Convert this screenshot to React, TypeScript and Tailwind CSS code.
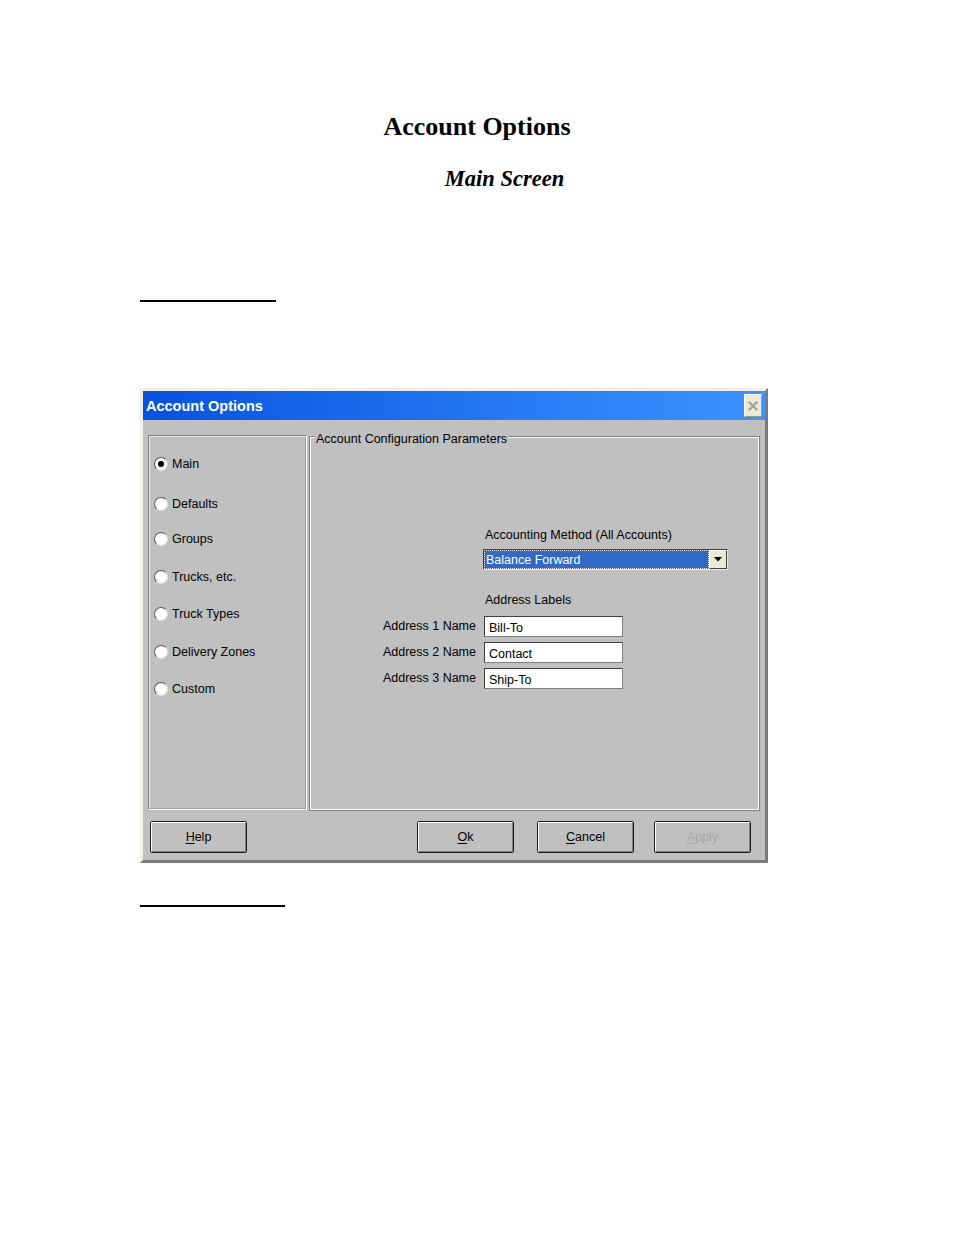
import React from "react";

const sans = "font-['Liberation_Sans',Arial,sans-serif]";

function Radio({ label, checked, mt }: { label: string; checked?: boolean; mt: string }) {
  return (
    <div className={`flex items-center h-[16px] pl-[4px] ${mt}`}>
      <span className="w-[14px] h-[14px] rounded-full bg-white border-[1.5px] border-t-[#5a5a5a] border-l-[#5a5a5a] border-b-[#dcdcdc] border-r-[#dcdcdc] flex items-center justify-center shrink-0">
        {checked && <span className="w-[6px] h-[6px] rounded-full bg-black" />}
      </span>
      <span className="ml-[4px] text-[12.5px] leading-[14px] text-black">{label}</span>
    </div>
  );
}

function Btn({ k, rest, ml, disabled }: { k: string; rest: string; ml: string; disabled?: boolean }) {
  return (
    <div className={`w-[97px] h-[32px] border border-[#1a1a1a] rounded-[2px] ${ml}`}>
      <div className="w-full h-full border border-t-white border-l-white border-b-[#808080] border-r-[#808080] flex items-center justify-center">
        <span className={`text-[12.5px] leading-[14px] ${disabled ? "text-[#a8a8a8]" : "text-black"}`}>
          <span className="underline underline-offset-2">{k}</span>
          {rest}
        </span>
      </div>
    </div>
  );
}

function Field({ label, value }: { label: string; value: string }) {
  return (
    <>
      <div className="text-right text-[12.5px] leading-[21px] text-black">{label}</div>
      <div className="h-[21px] bg-white border border-t-[#404040] border-l-[#404040] border-b-[#808080] border-r-[#808080] flex items-center pl-[4px] pt-[2px]">
        <span className="text-[12.5px] leading-[14px] text-black">{value}</span>
      </div>
    </>
  );
}

export default function App() {
  return (
    <div className="w-[954px] min-h-[1235px] bg-white flex flex-col">
      <div className="pt-[112px] text-center font-['Liberation_Serif','Times_New_Roman',serif] font-bold text-[26px] leading-[30px] text-black">
        Account Options
      </div>
      <div className="mt-[23px] pl-[55px] text-center font-['Liberation_Serif','Times_New_Roman',serif] font-bold italic text-[22.5px] leading-[28px] text-black">
        Main Screen
      </div>
      <div className="ml-[140px] mt-[107px] w-[136px] h-[2px] bg-black" />

      <div className={`ml-[140px] mt-[86px] w-[628px] h-[475px] border-[3px] border-t-[#f1efe4] border-l-[#f1efe4] border-b-[#7a7a7a] border-r-[#7a7a7a] bg-[#c0c0c0] flex flex-col ${sans}`}>
        <div className="h-[29px] bg-gradient-to-r from-[#0752e0] to-[#3c93ff] flex items-center justify-between pl-[3px] pr-[3px]">
          <span className="text-white font-bold text-[14.5px] leading-[16px]">Account Options</span>
          <div className="w-[18px] h-[23px] bg-[#ece9d8] border border-t-white border-l-white border-b-[#9d9a8a] border-r-[#9d9a8a] flex items-center justify-center">
            <svg width="10" height="10" viewBox="0 0 10 10">
              <path d="M1.5 1.5 L8.5 8.5 M8.5 1.5 L1.5 8.5" stroke="#a3a3a3" strokeWidth="2.2" strokeLinecap="square" />
            </svg>
          </div>
        </div>

        <div className="flex flex-col flex-1 pt-[15px]">
          <div className="flex pl-[5px] pr-[5px]">
            <div className="w-[159px] h-[375px] border border-t-[#808080] border-l-[#808080] border-b-white border-r-white">
              <div className="w-full h-full border border-t-[#e4e4e4] border-l-[#e4e4e4] border-b-[#a0a0a0] border-r-[#a0a0a0] flex flex-col pt-[19px]">
                <Radio label="Main" checked mt="mt-0" />
                <Radio label="Defaults" mt="mt-[24px]" />
                <Radio label="Groups" mt="mt-[19px]" />
                <Radio label="Trucks, etc." mt="mt-[22px]" />
                <Radio label="Truck Types" mt="mt-[21px]" />
                <Radio label="Delivery Zones" mt="mt-[22px]" />
                <Radio label="Custom" mt="mt-[21px]" />
              </div>
            </div>

            <div className="relative ml-[2px] w-[451px] h-[375px] mt-[1px] border border-[#808080]">
              <div className="w-full h-full border border-white flex flex-col pt-[90px]">
                <div className="ml-[174px] text-[12.5px] leading-[14px] text-black">Accounting Method (All Accounts)</div>
                <div className="ml-[172px] mt-[7px] w-[245px] h-[21px] border border-t-[#404040] border-l-[#404040] border-b-[#e8e8e8] border-r-[#e8e8e8] flex bg-white">
                  <div className="flex-1 bg-[#3169c6] border border-dotted border-[#e8e8e8] flex items-center pl-[1px]">
                    <span className="text-white text-[12.5px] leading-[14px]">Balance Forward</span>
                  </div>
                  <div className="w-[18px] bg-[#ece9d8] border border-t-white border-l-white border-b-[#404040] border-r-[#404040] flex items-center justify-center">
                    <svg width="8" height="5" viewBox="0 0 8 5">
                      <path d="M0 0 H8 L4 4.5 Z" fill="#000" />
                    </svg>
                  </div>
                </div>
                <div className="ml-[174px] mt-[23px] text-[12.5px] leading-[14px] text-black">Address Labels</div>
                <div className="mt-[9px] grid grid-cols-[165px_139px] gap-x-[8px] gap-y-[5px]">
                  <Field label="Address 1 Name" value="Bill-To" />
                  <Field label="Address 2 Name" value="Contact" />
                  <Field label="Address 3 Name" value="Ship-To" />
                </div>
              </div>
              <span className="absolute left-[5px] top-[-5px] bg-[#c0c0c0] pl-[1px] pr-[1px] text-[12.5px] leading-[14px] text-black">
                Account Configuration Parameters
              </span>
            </div>
          </div>

          <div className="flex pl-[7px] mt-[10px]">
            <Btn k="H" rest="elp" ml="ml-0" />
            <Btn k="O" rest="k" ml="ml-[170px]" />
            <Btn k="C" rest="ancel" ml="ml-[23px]" />
            <Btn k="A" rest="pply" ml="ml-[20px]" disabled />
          </div>
        </div>
      </div>

      <div className="ml-[140px] mt-[42px] w-[145px] h-[2px] bg-black" />
    </div>
  );
}
